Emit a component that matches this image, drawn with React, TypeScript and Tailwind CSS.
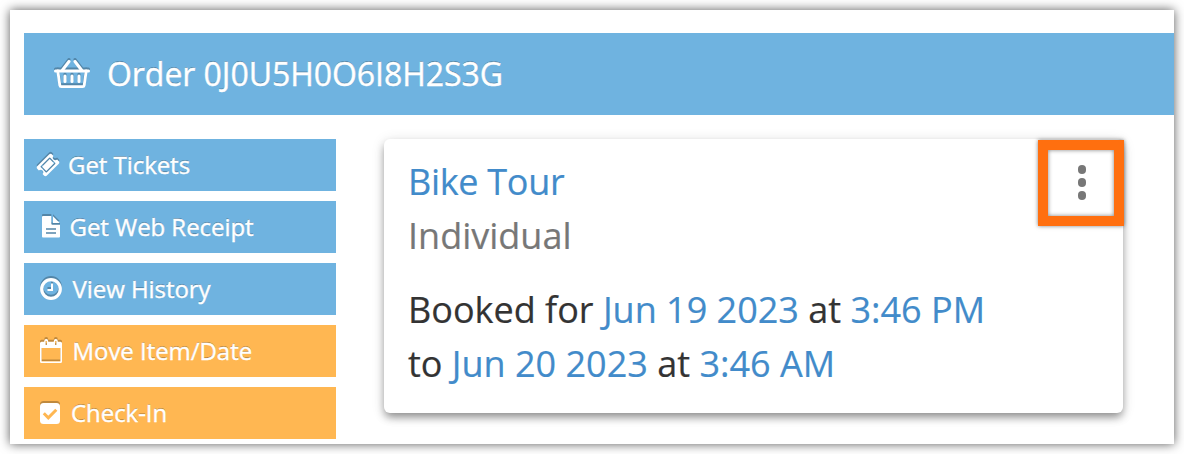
import type { ReactNode } from 'react';

const iconShadow = 'shrink-0 drop-shadow-[0_-1.5px_0_rgba(0,0,0,0.25)]';
const titleShadow = '[-webkit-text-stroke:0.4px_white] [text-shadow:0_-1.5px_0_rgba(0,0,0,0.28)]';

const BasketIcon = () => (
  <svg width="36" height="30" viewBox="0 0 36 30" fill="none" stroke="white" strokeLinecap="round" strokeLinejoin="round" className={iconShadow}>
    <path d="M1.5 12H34.5" strokeWidth="3" />
    <path d="M8.5 11L15 2.5M27.5 11L21 2.5" strokeWidth="3" />
    <path d="M3.8 12L5.8 26.2Q6 27.6 7.4 27.6H28.6Q30 27.6 30.2 26.2L32.2 12" strokeWidth="2.8" />
    <path d="M11 17V22.5M18 17V22.5M25 17V22.5" strokeWidth="3" />
  </svg>
);

const TicketIcon = () => (
  <svg width="24" height="24" viewBox="0 0 1792 1792" fill="white" className={iconShadow}>
    <path d="M1024 452l316 316-572 572-316-316zm-211 979l618-618q19-19 19-45t-19-45l-362-362q-18-18-45-18t-45 18l-618 618q-19 19-19 45t19 45l362 362q18 18 45 18t45-18zm889-637l-907 908q-37 37-90.5 37t-90.5-37l-126-125q56-56 56-136t-56-136-136-56-136 56l-125-126q-37-37-37-90.5t37-90.5l907-906q37-37 90.5-37t90.5 37l125 125q-56 56-56 136t56 136 136 56 136-56l126 125q37 37 37 90.5t-37 90.5z" />
  </svg>
);

const ReceiptIcon = () => (
  <svg width="18" height="22" viewBox="0 0 18 22" fill="white" className={iconShadow}>
    <path fillRule="evenodd" d="M1 0H9.3V7.5Q9.3 8.7 10.5 8.7H18V20.5Q18 21.5 17 21.5H1Q0 21.5 0 20.5V1Q0 0 1 0ZM4 12.2V13.7H14V12.2ZM4 16.2V17.7H14V16.2Z" />
    <path d="M11 0.3L17.7 7H11Z" />
  </svg>
);

const ClockIcon = () => (
  <svg width="22" height="22" viewBox="0 0 22 22" fill="none" stroke="white" className={iconShadow}>
    <circle cx="11" cy="11" r="9.3" strokeWidth="3.2" />
    <path d="M12 5.5V12H7.5" strokeWidth="2" />
  </svg>
);

const CalendarIcon = () => (
  <svg width="22" height="24" viewBox="0 0 22 24" fill="white" className={iconShadow}>
    <path fillRule="evenodd" d="M1.5 2.8H4.2V2.2Q4.2 0 6.2 0Q8.2 0 8.2 2.2V2.8H13.8V2.2Q13.8 0 15.8 0Q17.8 0 17.8 2.2V2.8H20.5Q22 2.8 22 4.3V22.5Q22 24 20.5 24H1.5Q0 24 0 22.5V4.3Q0 2.8 1.5 2.8ZM1.6 9V22.4H20.4V9ZM5.6 2V6H6.9V2ZM15.1 2V6H16.4V2Z" />
  </svg>
);

const CheckIcon = () => (
  <svg width="20" height="21" viewBox="0 0 20 21" fill="none" className={iconShadow}>
    <rect width="20" height="21" rx="3.5" fill="white" />
    <path d="M3.8 10.3L8.3 14.8L16.3 6.8" stroke="#ffb752" strokeWidth="3" />
  </svg>
);

type Action = {
  label: string;
  icon: ReactNode;
  className: string;
};

const actions: Action[] = [
  { label: 'Get Tickets', icon: <TicketIcon />, className: 'bg-[#6fb3e0] pl-3 gap-2' },
  { label: 'Get Web Receipt', icon: <ReceiptIcon />, className: 'bg-[#6fb3e0] pl-[18px] gap-[9.5px]' },
  { label: 'View History', icon: <ClockIcon />, className: 'bg-[#6fb3e0] pl-4 gap-[10.5px]' },
  { label: 'Move Item/Date', icon: <CalendarIcon />, className: 'bg-[#ffb752] pl-4 gap-[10.5px]' },
  { label: 'Check-In', icon: <CheckIcon />, className: 'bg-[#ffb752] pl-4 gap-[11px]' },
];

export default function App() {
  return (
    <div className="h-[454px] w-[1184px] overflow-hidden bg-white p-2.5 font-['Open_Sans',sans-serif]">
      <div className="h-[434px] bg-white pl-3.5 pt-[23px] shadow-[0_0_10px_rgba(0,0,0,0.65)]">
        <header className="flex h-[82px] items-center gap-[17px] bg-[#6fb3e0] pl-[30px] text-white">
          <BasketIcon />
          <h1 className={`text-[32px] leading-none tracking-[-0.05px] ${titleShadow}`}>Order 0J0U5H0O6I8H2S3G</h1>
        </header>

        <div className="flex items-start gap-12 pt-6">
          <nav className="flex w-[312px] flex-col gap-2.5">
            {actions.map((action) => (
              <button key={action.label} className={`flex h-[52px] items-center text-white ${action.className}`}>
                {action.icon}
                <span className={`text-2xl leading-none tracking-[-0.05px] ${titleShadow}`}>{action.label}</span>
              </button>
            ))}
          </nav>

          <section className="relative h-[274px] w-[739px] rounded-md bg-white pl-6 pt-4 text-4xl leading-[54px] text-[#333] [-webkit-text-stroke:0.2px_currentColor] shadow-[0_5px_8px_-1px_rgba(0,0,0,0.4),0_2px_14px_rgba(0,0,0,0.12)]">
            <h2 className="tracking-[-0.3px] text-[#428bca]">Bike Tour</h2>
            <p className="text-[#777]">Individual</p>
            <p className="mt-5">
              Booked for <span className="text-[#428bca]">Jun 19 2023</span> at <span className="text-[#428bca]">3:46 PM</span>
              <br />
              to <span className="text-[#428bca]">Jun 20 2023</span> at <span className="text-[#428bca]">3:46 AM</span>
            </p>
            <button
              aria-label="Item menu"
              className="absolute -right-px top-px flex h-[86px] w-[86px] flex-col items-center justify-center gap-[4.5px] border-10 border-[#ff6f0f] bg-white pb-px pl-[1.5px] shadow-[0_0_4px_rgba(0,0,0,0.5),inset_0_0_4px_rgba(0,0,0,0.5)]"
            >
              <span className="size-[8.5px] rounded-full bg-[#777]" />
              <span className="size-[8.5px] rounded-full bg-[#777]" />
              <span className="size-[8.5px] rounded-full bg-[#777]" />
            </button>
          </section>
        </div>
      </div>
    </div>
  );
}
